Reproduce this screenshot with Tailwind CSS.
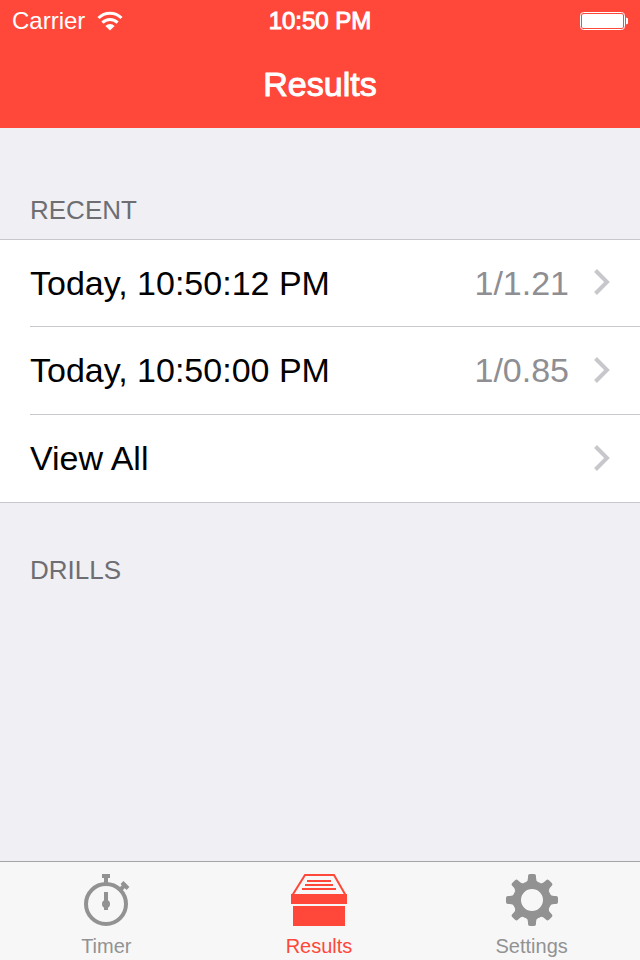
<!DOCTYPE html>
<html lang="en">
<head>
    <meta charset="UTF-8">
    <meta name="viewport" content="width=device-width, initial-scale=1.0">
    <title>Results</title>
    <script src="https://cdn.jsdelivr.net/npm/@tailwindcss/browser@4"></script>
</head>
<body class="bg-[#efeff4] flex flex-col min-h-screen font-['Liberation_Sans',Arial,sans-serif]">
    <!-- Header -->
    <header class="bg-[#ff473a] text-white h-32">
        <div class="grid grid-cols-3 items-center h-[41px] px-3 text-2xl">
            <div class="flex items-center gap-3">
                <span>Carrier</span>
                <svg class="w-[26px] h-5" viewBox="0 0 26 20" fill="none" stroke="currentColor" stroke-width="3">
                    <path d="M1.5 7a16.4 16.4 0 0 1 23 0"/>
                    <path d="M5.4 11.6a10.8 10.8 0 0 1 15.2 0"/>
                    <path d="M13 19.5l-4.6-4.6a6.5 6.5 0 0 1 9.2 0z" fill="currentColor" stroke="none"/>
                </svg>
            </div>
            <span class="text-center [-webkit-text-stroke:1px_white]">10:50 PM</span>
            <svg class="justify-self-end w-12 h-5" viewBox="0 0 48 20" fill="none">
                <rect x="0.5" y="1.5" width="44" height="17" rx="3" stroke="white"/>
                <rect x="2" y="3" width="41" height="14" rx="1.5" fill="white"/>
                <path d="M46 6.5q3 1 3 3.5t-3 3.5z" fill="white"/>
            </svg>
        </div>
        <h1 class="text-center text-[34px] leading-[87px] [-webkit-text-stroke:1px_white]">Results</h1>
    </header>

    <main class="flex-1">
        <!-- Recent -->
        <section>
            <h2 class="px-[30px] pt-16 pb-[11px] text-[26px] leading-9 text-[#6d6d72]">RECENT</h2>
            <ul class="bg-white border-y border-[#c8c7cc] text-[34px]">
                <li class="pl-[30px]">
                    <a href="#" class="flex items-center h-[87px] pr-[30px] border-b border-[#c8c7cc]">
                        <span class="flex-1">Today, 10:50:12 PM</span>
                        <span class="text-[#8e8e93]">1/1.21</span>
                        <svg class="ml-6 w-[17px] h-7" viewBox="0 0 17 28" fill="none" stroke="#c7c7cc" stroke-width="4"><path d="M2.5 1.5L14 13L2.5 24.5"/></svg>
                    </a>
                </li>
                <li class="pl-[30px]">
                    <a href="#" class="flex items-center h-[88px] pr-[30px] border-b border-[#c8c7cc]">
                        <span class="flex-1">Today, 10:50:00 PM</span>
                        <span class="text-[#8e8e93]">1/0.85</span>
                        <svg class="ml-6 w-[17px] h-7" viewBox="0 0 17 28" fill="none" stroke="#c7c7cc" stroke-width="4"><path d="M2.5 1.5L14 13L2.5 24.5"/></svg>
                    </a>
                </li>
                <li class="pl-[30px]">
                    <a href="#" class="flex items-center h-[87px] pr-[30px]">
                        <span class="flex-1">View All</span>
                        <svg class="ml-6 w-[17px] h-7" viewBox="0 0 17 28" fill="none" stroke="#c7c7cc" stroke-width="4"><path d="M2.5 1.5L14 13L2.5 24.5"/></svg>
                    </a>
                </li>
            </ul>
        </section>

        <!-- Drills -->
        <section>
            <h2 class="px-[30px] pt-[49px] text-[26px] leading-9 text-[#6d6d72]">DRILLS</h2>
        </section>
    </main>

    <!-- Tab bar -->
    <nav class="grid grid-cols-3 h-[99px] pr-0.5 bg-[#f7f7f8] border-t border-[#a5a5a9] text-xl leading-6 text-[#929292]">
        <a href="#" class="flex flex-col items-center gap-2 pt-3">
            <svg class="w-[52px] h-[52px]" viewBox="0 0 52 52" fill="none" stroke="currentColor">
                <circle cx="26" cy="30" r="20" stroke-width="4"/>
                <path d="M26 2v8" stroke-width="4"/>
                <path d="M22 2h8" stroke-width="4"/>
                <path d="M39 17l7-7" stroke-width="4"/>
                <path d="M42 8.500l6 6" stroke-width="4"/>
                <path d="M26 18v18" stroke-width="4"/>
                <circle cx="26" cy="30" r="4" fill="currentColor" stroke="none"/>
            </svg>
            <span>Timer</span>
        </a>
        <a href="#" class="flex flex-col items-center gap-2 pt-3 text-[#ff473a]">
            <svg class="w-14 h-[52px]" viewBox="0 0 56 52" fill="none" stroke="currentColor">
                <path d="M1.500 21L14 1h29l11.500 20" stroke-width="2"/>
                <path d="M16 7h24M14 11h28M11 15h34" stroke-width="2"/>
                <path d="M0 20h56v10H0zM2 32h52v20H2z" fill="currentColor" stroke="none"/>
            </svg>
            <span>Results</span>
        </a>
        <a href="#" class="flex flex-col items-center gap-2 pt-3">
            <svg class="w-[52px] h-[52px]" viewBox="-26 -26 52 52" fill="currentColor">
                <defs>
                    <path id="tooth" d="M-6 -18Q-4 -19 -4 -22V-24Q-4 -26 -2 -26H2Q4 -26 4 -24V-22Q4 -19 6 -18z"/>
                </defs>
                <circle r="15" fill="none" stroke="currentColor" stroke-width="8"/>
                <use href="#tooth"/>
                <use href="#tooth" transform="rotate(45)"/>
                <use href="#tooth" transform="rotate(90)"/>
                <use href="#tooth" transform="rotate(135)"/>
                <use href="#tooth" transform="rotate(180)"/>
                <use href="#tooth" transform="rotate(225)"/>
                <use href="#tooth" transform="rotate(270)"/>
                <use href="#tooth" transform="rotate(315)"/>
            </svg>
            <span>Settings</span>
        </a>
    </nav>
</body>
</html>
